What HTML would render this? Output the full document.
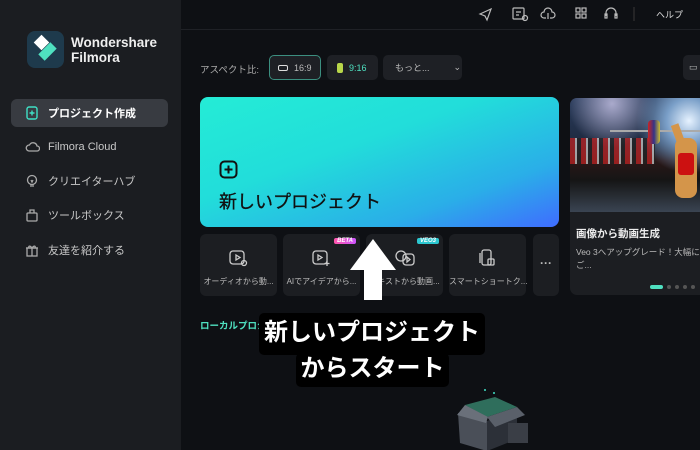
<!DOCTYPE html>
<html><head><meta charset="utf-8"><style>
*{margin:0;padding:0;box-sizing:border-box}
body{width:700px;height:450px;overflow:hidden;background:#0e1014;font-family:"Liberation Sans","Noto Sans CJK JP",sans-serif;color:#ddd;position:relative}
.abs{position:absolute}
.side{left:0;top:0;width:181px;height:450px;background:#1b1d21}
.nav{left:11px;width:157px;height:28px;border-radius:6px;font-size:11px;color:#c8c8c8;display:flex;align-items:center;padding-left:37px}
.nav svg{position:absolute;left:14px;top:7px}
.btn{height:25px;border-radius:5px;background:#1e2025;font-size:9px;color:#bbb;display:flex;align-items:center}
.tile{top:234px;height:62px;width:77px;background:#1c1e22;border-radius:6px;font-size:8px;color:#bbb;text-align:center}
.tile svg{position:absolute;left:28px;top:14px}
.tile span{position:absolute;left:0;right:0;top:42px;white-space:nowrap}
.badge{position:absolute;top:4px;right:4px;font-size:6px;font-weight:bold;color:#fff;padding:0 3px;border-radius:2px;font-style:italic}
.ov{background:#000;color:#fff;font-weight:bold;font-size:24px;border-radius:5px;text-align:center;line-height:40px}
</style></head><body>
<div class="abs side"></div>
<div class="abs" style="left:181px;top:29px;width:519px;height:1px;background:#1f2126"></div>
<!-- logo -->
<div class="abs" style="left:27px;top:31px;width:37px;height:37px;border-radius:8px;background:#1e3a4c"></div>
<div class="abs" style="left:36px;top:37px;width:11px;height:11px;background:#fff;transform:rotate(45deg)"></div>
<div class="abs" style="left:39px;top:47px;width:17px;height:9px;background:#4fe0c0;transform:rotate(-45deg)"></div>
<div class="abs" style="left:71px;top:35px;font-size:13.5px;font-weight:bold;color:#eee;line-height:15px">Wondershare<br>Filmora</div>
<!-- nav -->
<div class="abs nav" style="top:99px;background:#383b41;color:#fff;font-weight:bold"><svg width="14" height="14" viewBox="0 0 14 14" fill="none" stroke="#3fe0c5" stroke-width="1.4"><rect x="2" y="1" width="10" height="12" rx="2"/><path d="M7 4.5v5M4.5 7h5"/></svg>プロジェクト作成</div>
<div class="abs nav" style="top:133px"><svg width="15" height="14" viewBox="0 0 15 14" fill="none" stroke="#aaa" stroke-width="1.3"><path d="M4 11h8a2.5 2.5 0 0 0 0-5 4 4 0 0 0-7.5-1A3 3 0 0 0 4 11z"/></svg>Filmora Cloud</div>
<div class="abs nav" style="top:167px"><svg width="14" height="14" viewBox="0 0 14 14" fill="none" stroke="#aaa" stroke-width="1.3"><circle cx="7" cy="6" r="4.5"/><path d="M5 12h4M6 6l1 2 1-2"/></svg>クリエイターハブ</div>
<div class="abs nav" style="top:201px"><svg width="14" height="14" viewBox="0 0 14 14" fill="none" stroke="#aaa" stroke-width="1.3"><rect x="2" y="5" width="10" height="8" rx="1"/><path d="M5 5V2h4v3"/></svg>ツールボックス</div>
<div class="abs nav" style="top:236px"><svg width="14" height="14" viewBox="0 0 14 14" fill="none" stroke="#aaa" stroke-width="1.3"><rect x="2" y="5" width="10" height="8"/><path d="M1 5h12M7 5v8M7 5C5 2 3 3 4 5M7 5c2-3 4-2 3 0"/></svg>友達を紹介する</div>
<!-- top icons -->
<div class="abs" style="left:477px;top:5px">
<svg width="210" height="18" viewBox="0 0 210 18" fill="none" stroke="#bbb" stroke-width="1.2"><path d="M3 9l11-5-4 11-2-4z"/><rect x="36" y="3" width="11" height="11" rx="1"/><path d="M39 7h5M39 10h3"/><circle cx="48" cy="13" r="2.5"/><path d="M69 13h-2a3 3 0 0 1 0-6 4 4 0 0 1 8 0 3 3 0 0 1 0 6h-2M71 8v6"/><rect x="99" y="3" width="4" height="4"/><rect x="105" y="3" width="4" height="4"/><rect x="99" y="9" width="4" height="4"/><rect x="105" y="9" width="4" height="4"/><path d="M129 11V8a5 5 0 0 1 10 0v3"/><rect x="128" y="9" width="2" height="4"/><rect x="138" y="9" width="2" height="4"/><path d="M157 2v14" stroke="#333"/></svg></div>
<div class="abs" style="left:656px;top:8px;font-size:9px;color:#ddd">ヘルプ</div>
<!-- aspect row -->
<div class="abs" style="left:200px;top:62px;font-size:9.5px;color:#aaa">アスペクト比:</div>
<div class="abs btn" style="left:269px;top:55px;width:52px;border:1px solid #3c8f80;padding-left:8px;gap:6px"><span style="width:10px;height:6px;border:1.3px solid #ddd;border-radius:2px;display:inline-block"></span>16:9</div>
<div class="abs btn" style="left:327px;top:55px;width:51px;padding-left:10px;gap:6px;color:#4fe0c0"><span style="width:6px;height:10px;background:#b8d64a;border-radius:2px;display:inline-block"></span>9:16</div>
<div class="abs btn" style="left:383px;top:55px;width:79px;padding-left:12px">もっと...<span style="margin-left:24px">⌄</span></div>
<div class="abs btn" style="left:683px;top:55px;width:30px;padding-left:6px">▭</div>
<!-- big card -->
<div class="abs" style="left:200px;top:97px;width:359px;height:130px;border-radius:8px;background:linear-gradient(160deg,#24ecd6 0%,#22ddda 40%,#2aaee8 75%,#3f6cff 100%)"></div>
<svg class="abs" style="left:219px;top:160px" width="19" height="19" viewBox="0 0 19 19" fill="none" stroke="#111" stroke-width="2"><rect x="1.5" y="1.5" width="16" height="16" rx="4"/><path d="M9.5 5.5v8M5.5 9.5h8"/></svg>
<div class="abs" style="left:219px;top:188px;font-size:18px;color:#111;-webkit-text-stroke:0.3px #111">新しいプロジェクト</div>
<!-- right card -->
<div class="abs" style="left:570px;top:98px;width:140px;height:197px;border-radius:7px;background:#1c1e22;overflow:hidden">
<div style="height:114px;background:radial-gradient(circle at 85% 20%,#e6f2ff 0,#7a9fc8 15%,transparent 35%),radial-gradient(circle at 30% 5%,#aac 0,transparent 30%),linear-gradient(180deg,#2a3c5c 0%,#1e2a40 40%,#2a1818 55%,#151515 72%,#3a4452 100%);position:relative">
<div style="position:absolute;left:0;top:40px;width:85px;height:26px;background:repeating-linear-gradient(90deg,#b22 0 5px,#ccc 5px 7px,#222 7px 11px);opacity:.75"></div>
<div style="position:absolute;left:40px;top:32px;width:100px;height:2px;background:#aaa"></div>
<div style="position:absolute;left:78px;top:22px;width:12px;height:24px;border-radius:4px;background:linear-gradient(90deg,#c22,#338,#cb3)"></div>
<div style="position:absolute;left:104px;top:26px;width:8px;height:20px;background:#d4954a;transform:rotate(-20deg)"></div>
<div style="position:absolute;left:105px;top:40px;width:22px;height:60px;border-radius:8px;background:#d4954a"></div>
<div style="position:absolute;left:108px;top:55px;width:16px;height:22px;background:#c11;border-radius:3px"></div>
</div>
<div style="padding:14px 6px 0;font-size:10.5px;font-weight:bold;color:#eee;white-space:nowrap">画像から動画生成</div>
<div style="padding:5px 6px 0;font-size:8.5px;color:#bbb;white-space:nowrap;line-height:13px">Veo 3へアップグレード！大幅に強化<br>ご...</div>
</div>
<div class="abs" style="left:650px;top:285px;width:13px;height:4px;border-radius:2px;background:#4fe0c0"></div>
<div class="abs" style="left:667px;top:285px;font-size:0">
<span style="display:inline-block;width:4px;height:4px;border-radius:2px;background:#555;margin-right:4px"></span><span style="display:inline-block;width:4px;height:4px;border-radius:2px;background:#555;margin-right:4px"></span><span style="display:inline-block;width:4px;height:4px;border-radius:2px;background:#555;margin-right:4px"></span><span style="display:inline-block;width:4px;height:4px;border-radius:2px;background:#555"></span></div>
<!-- tiles -->
<div class="abs tile" style="left:200px"><svg width="20" height="20" viewBox="0 0 20 20" fill="none" stroke="#ccc" stroke-width="1.3"><rect x="2" y="3" width="14" height="13" rx="3"/><path d="M8 7l4 2.5L8 12z"/><circle cx="16" cy="15" r="2.5"/></svg><span>オーディオから動...</span></div>
<div class="abs tile" style="left:283px"><div class="badge" style="background:linear-gradient(90deg,#f5a,#c5f)">BETA</div><svg width="20" height="20" viewBox="0 0 20 20" fill="none" stroke="#ccc" stroke-width="1.3"><rect x="2" y="3" width="14" height="13" rx="3"/><path d="M7 7l4 2.5L7 12z"/><path d="M16 13v5M13.5 15.5h5"/></svg><span>AIでアイデアから...</span></div>
<div class="abs tile" style="left:366px"><div class="badge" style="background:#2cc7d0">VEO3</div><svg width="22" height="20" viewBox="0 0 22 20" fill="none" stroke="#ccc" stroke-width="1.3"><circle cx="7" cy="8" r="5"/><rect x="9" y="6" width="11" height="11" rx="3"/><path d="M13 9l3 2.5-3 2.5z"/></svg><span>テキストから動画...</span></div>
<div class="abs tile" style="left:449px"><svg width="20" height="20" viewBox="0 0 20 20" fill="none" stroke="#ccc" stroke-width="1.3"><rect x="5" y="2" width="9" height="15" rx="2"/><path d="M3 5v10"/><rect x="11" y="11" width="6" height="6" rx="1"/></svg><span>スマートショートク...</span></div>
<div class="abs tile" style="left:533px;width:26px"><span style="top:22px;font-size:12px;font-weight:bold">···</span></div>
<div class="abs" style="left:200px;top:318px;font-size:9.5px;color:#4fe0c0;font-weight:bold">ローカルプロジェクト</div>
<!-- box illustration -->
<svg class="abs" style="left:450px;top:385px" width="85" height="65" viewBox="0 0 85 65"><path d="M15 20l30-8 22 10-30 10z" fill="#2f6e5c"/><path d="M8 28l29 8v30L10 58z" fill="#4a4f58"/><path d="M37 36l30-12v30l-30 12z" fill="#2c3038"/><path d="M15 20l-8 10 29 8 2-6z" fill="#6a707a"/><path d="M67 22l8 8-30 12-8-10z" fill="#5a606a"/><rect x="58" y="38" width="20" height="20" fill="#3a3e46"/><circle cx="35" cy="5" r="1" fill="#3fe0c5"/><circle cx="44" cy="8" r="1" fill="#3fe0c5"/></svg>
<!-- overlay -->
<svg class="abs" style="left:348px;top:238px" width="50" height="64"><path d="M25 1L48 32H34v30H16V32H2z" fill="#fff"/></svg>
<div class="abs ov" style="left:259px;top:313px;width:226px;height:42px">新しいプロジェクト</div>
<div class="abs ov" style="left:296px;top:353px;width:153px;height:34px;line-height:32px">からスタート</div>
</body></html>
